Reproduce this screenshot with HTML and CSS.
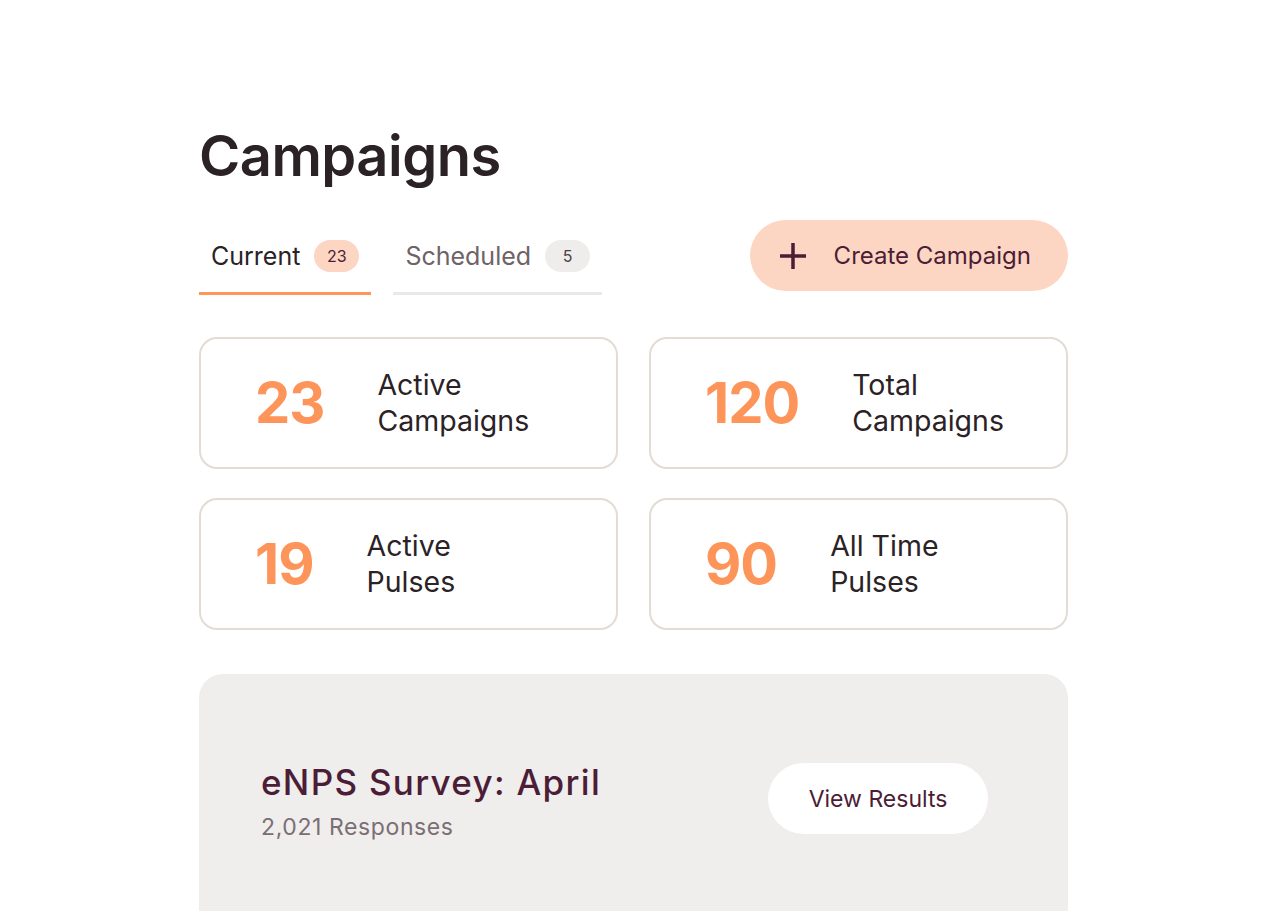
FILE: index.html
```html
<!DOCTYPE html>
<html>
  <head>
    <title>Campaigns</title>
    <meta name="viewport" content="width=device-width, initial-scale=1">
    <link rel="stylesheet" href="styles.css">
  </head>
  <body>
    <main class="page">
      <h1 class="page-title">Campaigns</h1>

      <div class="toolbar">
        <nav class="tabs">
          <a class="tab tab-active" href="#">Current <span class="count">23</span></a>
          <a class="tab" href="#">Scheduled <span class="count">5</span></a>
        </nav>
        <button class="create-btn" type="button">
          <svg class="create-icon" width="28" height="28" viewBox="0 0 28 28" aria-hidden="true">
            <path d="M14 1v26M1 14h26" stroke="currentColor" stroke-width="3.5" fill="none"/>
          </svg>
          Create Campaign
        </button>
      </div>

      <section class="stats">
        <div class="stat">
          <span class="stat-value">23</span>
          <span class="stat-label">Active<br>Campaigns</span>
        </div>
        <div class="stat">
          <span class="stat-value">120</span>
          <span class="stat-label">Total<br>Campaigns</span>
        </div>
        <div class="stat">
          <span class="stat-value">19</span>
          <span class="stat-label">Active<br>Pulses</span>
        </div>
        <div class="stat">
          <span class="stat-value">90</span>
          <span class="stat-label">All Time<br>Pulses</span>
        </div>
      </section>

      <section class="survey">
        <div class="survey-info">
          <h2 class="survey-name">eNPS Survey: April</h2>
          <p class="survey-meta">2,021 Responses</p>
        </div>
        <button class="results-btn" type="button">View Results</button>
      </section>
    </main>
  </body>
</html>
```

FILE: styles.css
```css
body {
  margin: 0;
  background: #fff;
  font-family: Inter, "Noto Sans", sans-serif;
  color: #2b2226;
  overflow: hidden;
}
.page {
  width: 869px;
  margin: 0 0 0 199px;
  padding-top: 121px;
}
.page-title {
  margin: 0;
  font-size: 56px;
  line-height: 70px;
  font-weight: 600;
  letter-spacing: -0.5px;
}

/* tabs + create button */
.toolbar {
  display: flex;
  justify-content: space-between;
  align-items: flex-start;
  margin-top: 29px;
}
.tabs {
  display: flex;
  gap: 22px;
  margin-top: 20px;
}
.tab {
  display: flex;
  align-items: center;
  gap: 14px;
  padding: 0 12px 20px;
  border-bottom: 3px solid #ebe8e8;
  font-size: 25px;
  line-height: 32px;
  color: #6e6367;
  text-decoration: none;
}
.tab-active {
  color: #2b2226;
  border-bottom-color: #ff965a;
}
.count {
  display: inline-flex;
  justify-content: center;
  align-items: center;
  width: 45px;
  height: 32px;
  border-radius: 16px;
  background: #efecec;
  font-size: 16px;
  color: #4a3f44;
}
.tab-active .count {
  background: #fcd6c2;
  color: #4b1d36;
}
.create-btn {
  display: flex;
  align-items: center;
  gap: 27px;
  height: 71px;
  padding: 0 37px 0 29px;
  border: 0;
  border-radius: 36px;
  background: #fcd6c2;
  color: #4b1d36;
  font-family: inherit;
  font-size: 24px;
  cursor: pointer;
}

/* stat cards */
.stats {
  display: grid;
  grid-template-columns: 1fr 1fr;
  column-gap: 31px;
  row-gap: 29px;
  margin-top: 42px;
}
.stat {
  display: flex;
  align-items: center;
  gap: 53px;
  height: 132px;
  box-sizing: border-box;
  padding-left: 54px;
  border: 2px solid #e3dcd4;
  border-radius: 18px;
}
.stat-value {
  font-size: 56px;
  font-weight: 700;
  letter-spacing: -1px;
  color: #fd945a;
}
.stat-label {
  font-size: 28.5px;
  line-height: 36px;
}

/* latest survey */
.survey {
  display: flex;
  justify-content: space-between;
  align-items: flex-start;
  height: 260px;
  margin-top: 44px;
  padding: 88px 80px 0 62px;
  border-radius: 24px;
  background: #f0eded;
  box-sizing: border-box;
}
.survey-name {
  margin: 0;
  font-size: 35px;
  line-height: 40px;
  font-weight: 500;
  letter-spacing: 1.3px;
  color: #4b1d36;
}
.survey-meta {
  margin: 11px 0 0;
  font-size: 23px;
  letter-spacing: 0.6px;
  color: #7b6f74;
}
.results-btn {
  width: 220px;
  height: 71px;
  margin-top: 1px;
  border: 0;
  border-radius: 36px;
  background: #fff;
  color: #4b1d36;
  font-family: inherit;
  font-size: 23px;
  cursor: pointer;
}
```
